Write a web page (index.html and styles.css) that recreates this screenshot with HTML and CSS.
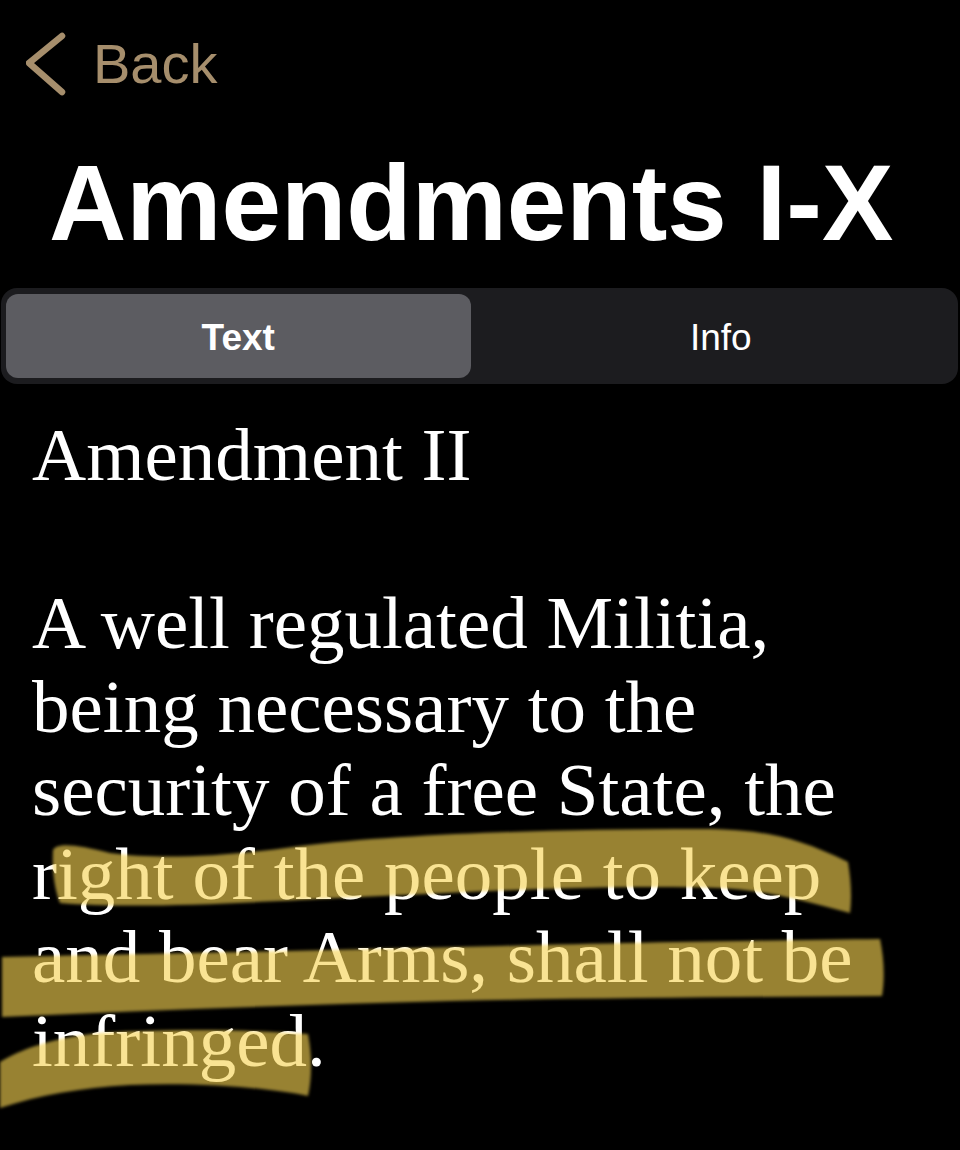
FILE: index.html
```html
<!DOCTYPE html>
<html lang="en">
<head>
<meta charset="utf-8">
<title>Amendments I-X</title>
<link rel="stylesheet" href="styles.css">
</head>
<body>
<div class="page">
  <nav class="nav">
    <svg class="chev" width="40" height="64" viewBox="0 0 40 64" aria-hidden="true">
      <path d="M36 4 L3 31 L36 60" fill="none" stroke="#a68e6c" stroke-width="6.5" stroke-linecap="round" stroke-linejoin="round"/>
    </svg>
    <span class="back">Back</span>
  </nav>
  <h1 class="title">Amendments I-X</h1>
  <div class="segmented">
    <div class="seg seg-active">Text</div>
    <div class="seg">Info</div>
  </div>
  <article class="content">
    <h2 class="heading">Amendment II</h2>
    <p class="body">A well regulated Militia, being necessary to the security of a free State, the right of the people to keep and bear Arms, shall not be infringed.</p>
  </article>
  <svg class="marks" width="960" height="1150" viewBox="0 0 960 1150" aria-hidden="true">
    <defs>
      <filter id="soft" x="-5%" y="-20%" width="110%" height="140%">
        <feGaussianBlur stdDeviation="1.6"/>
      </filter>
    </defs>
    <g class="hl" filter="url(#soft)">
      <path d="M53 850 C58 842 78 845 110 853 C160 860 230 856 300 846 C400 834 550 829 700 829 C760 829 795 836 848 862 C851 880 852 898 850 913 C800 900 770 891 720 888 C600 884 450 893 300 900 C200 905 120 908 60 903 C54 888 52 868 53 850 Z"/>
      <path d="M2 957 C100 955 300 951 500 946 C650 942 800 940 880 939 C884 958 885 978 882 996 C750 997 600 998 450 1001 C300 1005 150 1010 2 1017 Z"/>
      <path d="M0 1062 C20 1050 50 1038 100 1033 C180 1028 250 1030 308 1034 C312 1055 312 1078 308 1096 C270 1088 200 1082 130 1085 C80 1088 40 1095 0 1108 Z"/>
    </g>
  </svg>
</div>
</body>
</html>
```
FILE: styles.css
```css
html, body {
  margin: 0;
  padding: 0;
  background: #000;
}

.page {
  position: relative;
  width: 960px;
  min-height: 1150px;
  overflow: hidden;
  background: #000;
  color: #fff;
  font-family: "Liberation Sans", Arial, sans-serif;
}

.nav {
  display: flex;
  align-items: center;
  height: 64px;
  padding: 32px 0 0 26px;
}

.chev {
  display: block;
  flex: none;
}

.back {
  margin-left: 27px;
  font-size: 56px;
  line-height: 64px;
  color: #a68e6c;
}

.title {
  margin: 48px 0 0;
  padding-left: 49px;
  font-size: 107px;
  font-weight: 700;
  line-height: 118px;
  color: #fff;
}

.segmented {
  display: grid;
  grid-template-columns: 1fr 1fr;
  column-gap: 18px;
  margin: 26px 2px 0 1px;
  padding: 6px 5px;
  height: 84px;
  background: #1c1c1f;
  border-radius: 16px;
}

.seg {
  display: flex;
  align-items: center;
  justify-content: center;
  padding-top: 4px;
  box-sizing: border-box;
  font-size: 37px;
  color: #fff;
  border-radius: 12px;
}

.seg-active {
  background: #5c5c61;
  font-weight: 700;
}

.content {
  margin-top: 29px;
  padding: 0 33px 0 32px;
  font-family: "Liberation Serif", "Times New Roman", serif;
  color: #fff;
}

.heading {
  margin: 0;
  font-size: 75px;
  font-weight: 400;
  line-height: 84px;
}

.body {
  margin: 84px 0 0;
  font-size: 75px;
  line-height: 83.5px;
}

.marks {
  position: absolute;
  left: 0;
  top: 0;
  pointer-events: none;
}

.hl path {
  fill: rgba(245, 210, 82, 0.62);
}
```
